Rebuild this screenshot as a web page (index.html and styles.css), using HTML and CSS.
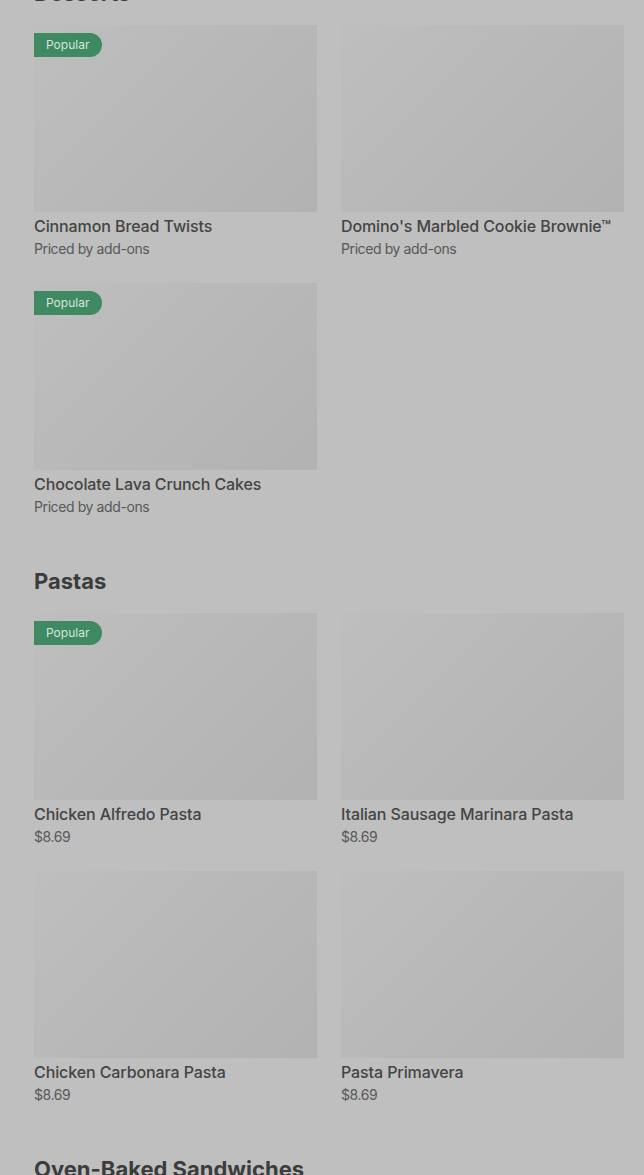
FILE: index.html
```html
<!DOCTYPE html>
<html lang="en">
<head>
<meta charset="utf-8">
<title>Menu</title>
<link rel="stylesheet" href="styles.css">
</head>
<body>
<main class="menu">
  <section class="section">
    <h2 class="section-title">Desserts</h2>
    <div class="grid">
      <div class="card">
        <div class="thumb"><span class="badge">Popular</span></div>
        <div class="name">Cinnamon Bread Twists</div>
        <div class="price">Priced by add-ons</div>
      </div>
      <div class="card">
        <div class="thumb"></div>
        <div class="name">Domino's Marbled Cookie Brownie™</div>
        <div class="price">Priced by add-ons</div>
      </div>
      <div class="card">
        <div class="thumb"><span class="badge">Popular</span></div>
        <div class="name">Chocolate Lava Crunch Cakes</div>
        <div class="price">Priced by add-ons</div>
      </div>
    </div>
  </section>
  <section class="section">
    <h2 class="section-title">Pastas</h2>
    <div class="grid">
      <div class="card">
        <div class="thumb"><span class="badge">Popular</span></div>
        <div class="name">Chicken Alfredo Pasta</div>
        <div class="price">$8.69</div>
      </div>
      <div class="card">
        <div class="thumb"></div>
        <div class="name">Italian Sausage Marinara Pasta</div>
        <div class="price">$8.69</div>
      </div>
      <div class="card">
        <div class="thumb"></div>
        <div class="name">Chicken Carbonara Pasta</div>
        <div class="price">$8.69</div>
      </div>
      <div class="card">
        <div class="thumb"></div>
        <div class="name">Pasta Primavera</div>
        <div class="price">$8.69</div>
      </div>
    </div>
  </section>
  <section class="section">
    <h2 class="section-title">Oven-Baked Sandwiches</h2>
  </section>
</main>
</body>
</html>
```

FILE: styles.css
```css
html, body {
  margin: 0;
  padding: 0;
  background: #bfbfbf;
  overflow: hidden;
}
body {
  font-family: Inter, "Noto Sans", sans-serif;
  color: #424242;
}
.menu {
  margin-top: -21px;
  padding: 0 20px 0 34px;
  display: flex;
  flex-direction: column;
  gap: 50px;
}
.section {
  display: flex;
  flex-direction: column;
  gap: 18px;
}
.section-title {
  margin: 0;
  font-size: 22px;
  line-height: 28px;
  font-weight: 700;
  letter-spacing: 0;
  color: #3c3c3c;
}
.grid {
  display: grid;
  grid-template-columns: 283px 283px;
  column-gap: 24px;
  row-gap: 24px;
}
.card {
  display: flex;
  flex-direction: column;
}
.thumb {
  position: relative;
  height: 187px;
  background: linear-gradient(135deg, #bebebe 0%, #b8b8b8 50%, #b2b2b2 100%);
  margin-bottom: 4px;
}
.badge {
  position: absolute;
  top: 8px;
  left: 0;
  height: 24px;
  width: 68px;
  box-sizing: border-box;
  padding-left: 12px;
  border-radius: 0 12px 12px 0;
  background: #3f8a62;
  color: #d6e6dc;
  font-size: 12px;
  line-height: 24px;
}
.name {
  font-size: 16px;
  line-height: 20px;
  font-weight: 500;
  letter-spacing: -0.1px;
  color: #444444;
  white-space: nowrap;
}
.price {
  margin-top: 3px;
  font-size: 14px;
  line-height: 20px;
  letter-spacing: -0.4px;
  color: #585858;
}
```
